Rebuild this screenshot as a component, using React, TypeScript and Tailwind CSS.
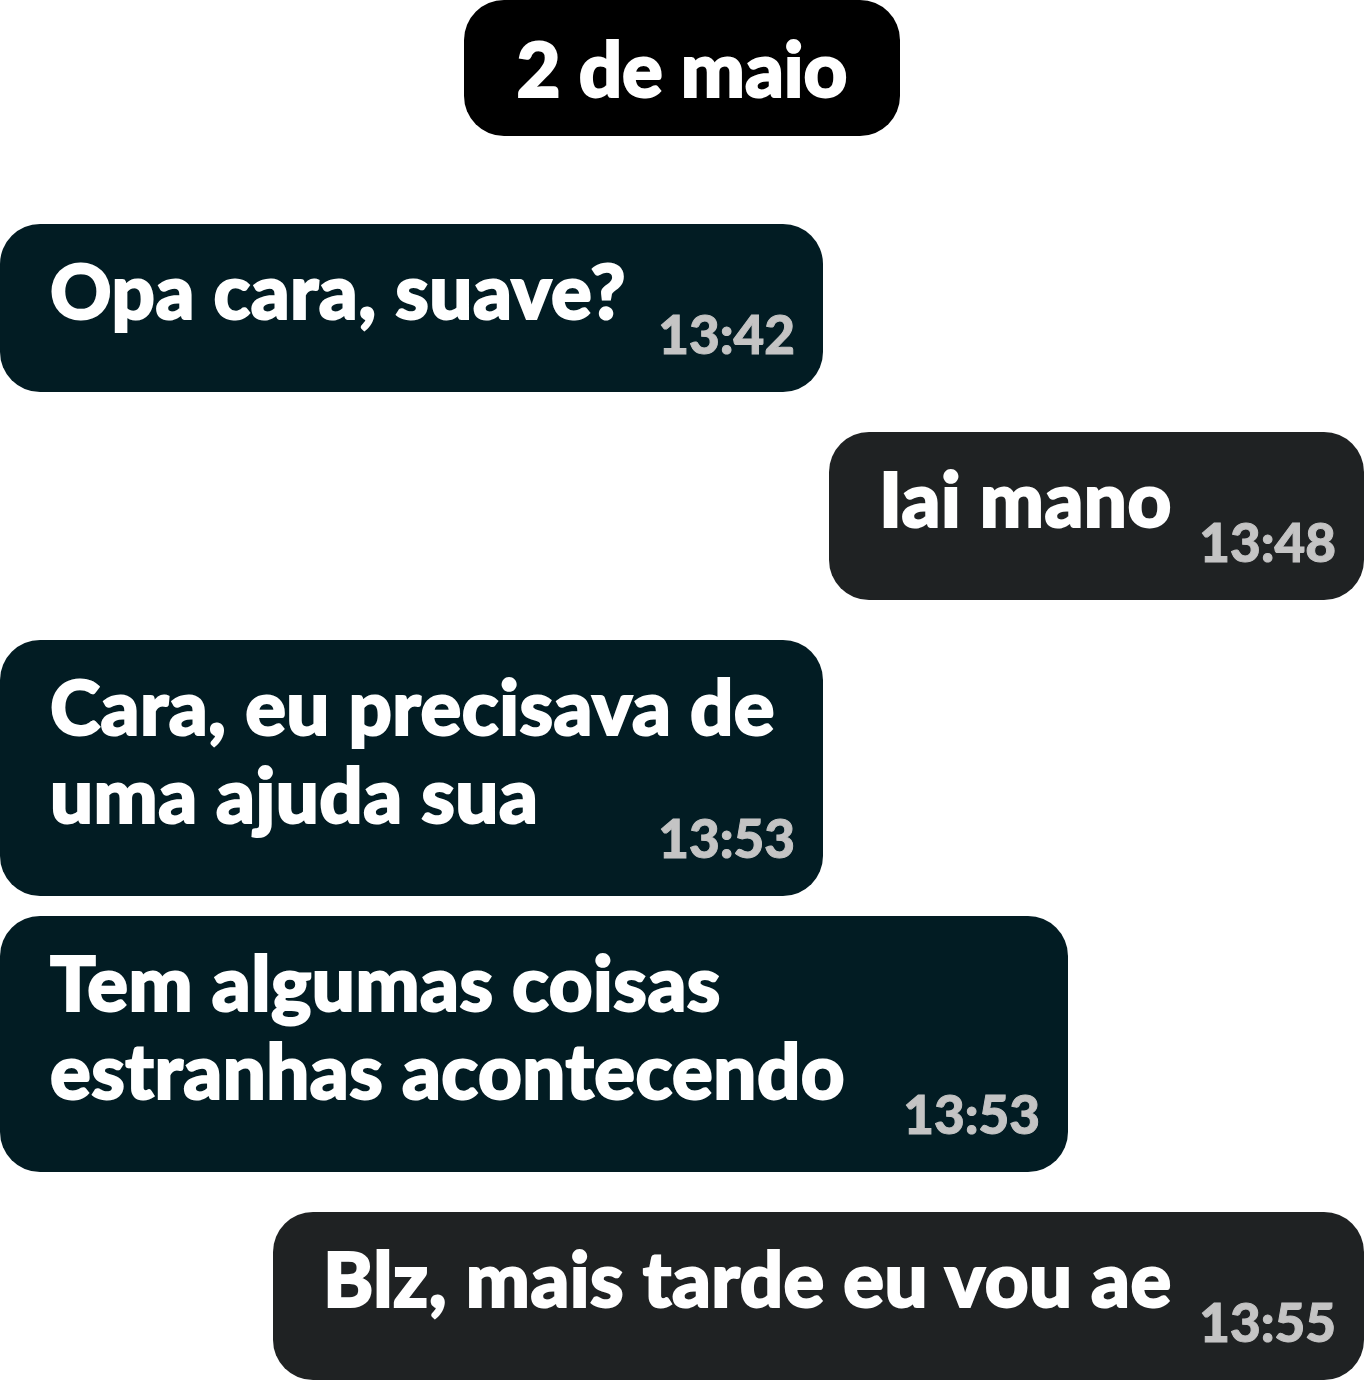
import React from "react";

const font = { fontFamily: "Lato, 'Noto Sans', sans-serif" };

function Bubble({ lines, time, side, width }: { lines: string[]; time: string; side: "left" | "right"; width: string }) {
  const bg = side === "left" ? "bg-[#021c23]" : "bg-[#1f2223]";
  return (
    <div className={`relative ${width} ${bg} rounded-[40px] pl-[50px] pr-[28px] pt-[22px] pb-[58px] ${side === "right" ? "self-end" : "self-start"}`}>
      {lines.map((l, i) => (
        <div key={i} className="text-[76px] leading-[88px] font-black tracking-[0.5px] text-white whitespace-nowrap [-webkit-text-stroke:2px_#ffffff]">
          {l}
        </div>
      ))}
      <div className="absolute right-[28px] bottom-[32px] text-[53px] leading-none font-black text-[#c4c4c4] [-webkit-text-stroke:1px_#c4c4c4]">{time}</div>
    </div>
  );
}

export default function App() {
  return (
    <div className="w-[1364px] h-[1380px] bg-white flex flex-col overflow-hidden" style={font}>
      <div className="self-center w-[436px] h-[136px] bg-black rounded-[40px] flex items-center justify-center text-white text-[76px] font-black leading-none [-webkit-text-stroke:2px_#ffffff]">
        2 de maio
      </div>
      <div className="mt-[88px] flex flex-col">
        <Bubble side="left" width="w-[823px]" lines={["Opa cara, suave?"]} time="13:42" />
        <div className="h-[40px]" />
        <Bubble side="right" width="w-[535px]" lines={["Iai mano"]} time="13:48" />
        <div className="h-[40px]" />
        <Bubble side="left" width="w-[823px]" lines={["Cara, eu precisava de", "uma ajuda sua"]} time="13:53" />
        <div className="h-[20px]" />
        <Bubble side="left" width="w-[1068px]" lines={["Tem algumas coisas", "estranhas acontecendo"]} time="13:53" />
        <div className="h-[40px]" />
        <Bubble side="right" width="w-[1091px]" lines={["Blz, mais tarde eu vou ae"]} time="13:55" />
      </div>
    </div>
  );
}
